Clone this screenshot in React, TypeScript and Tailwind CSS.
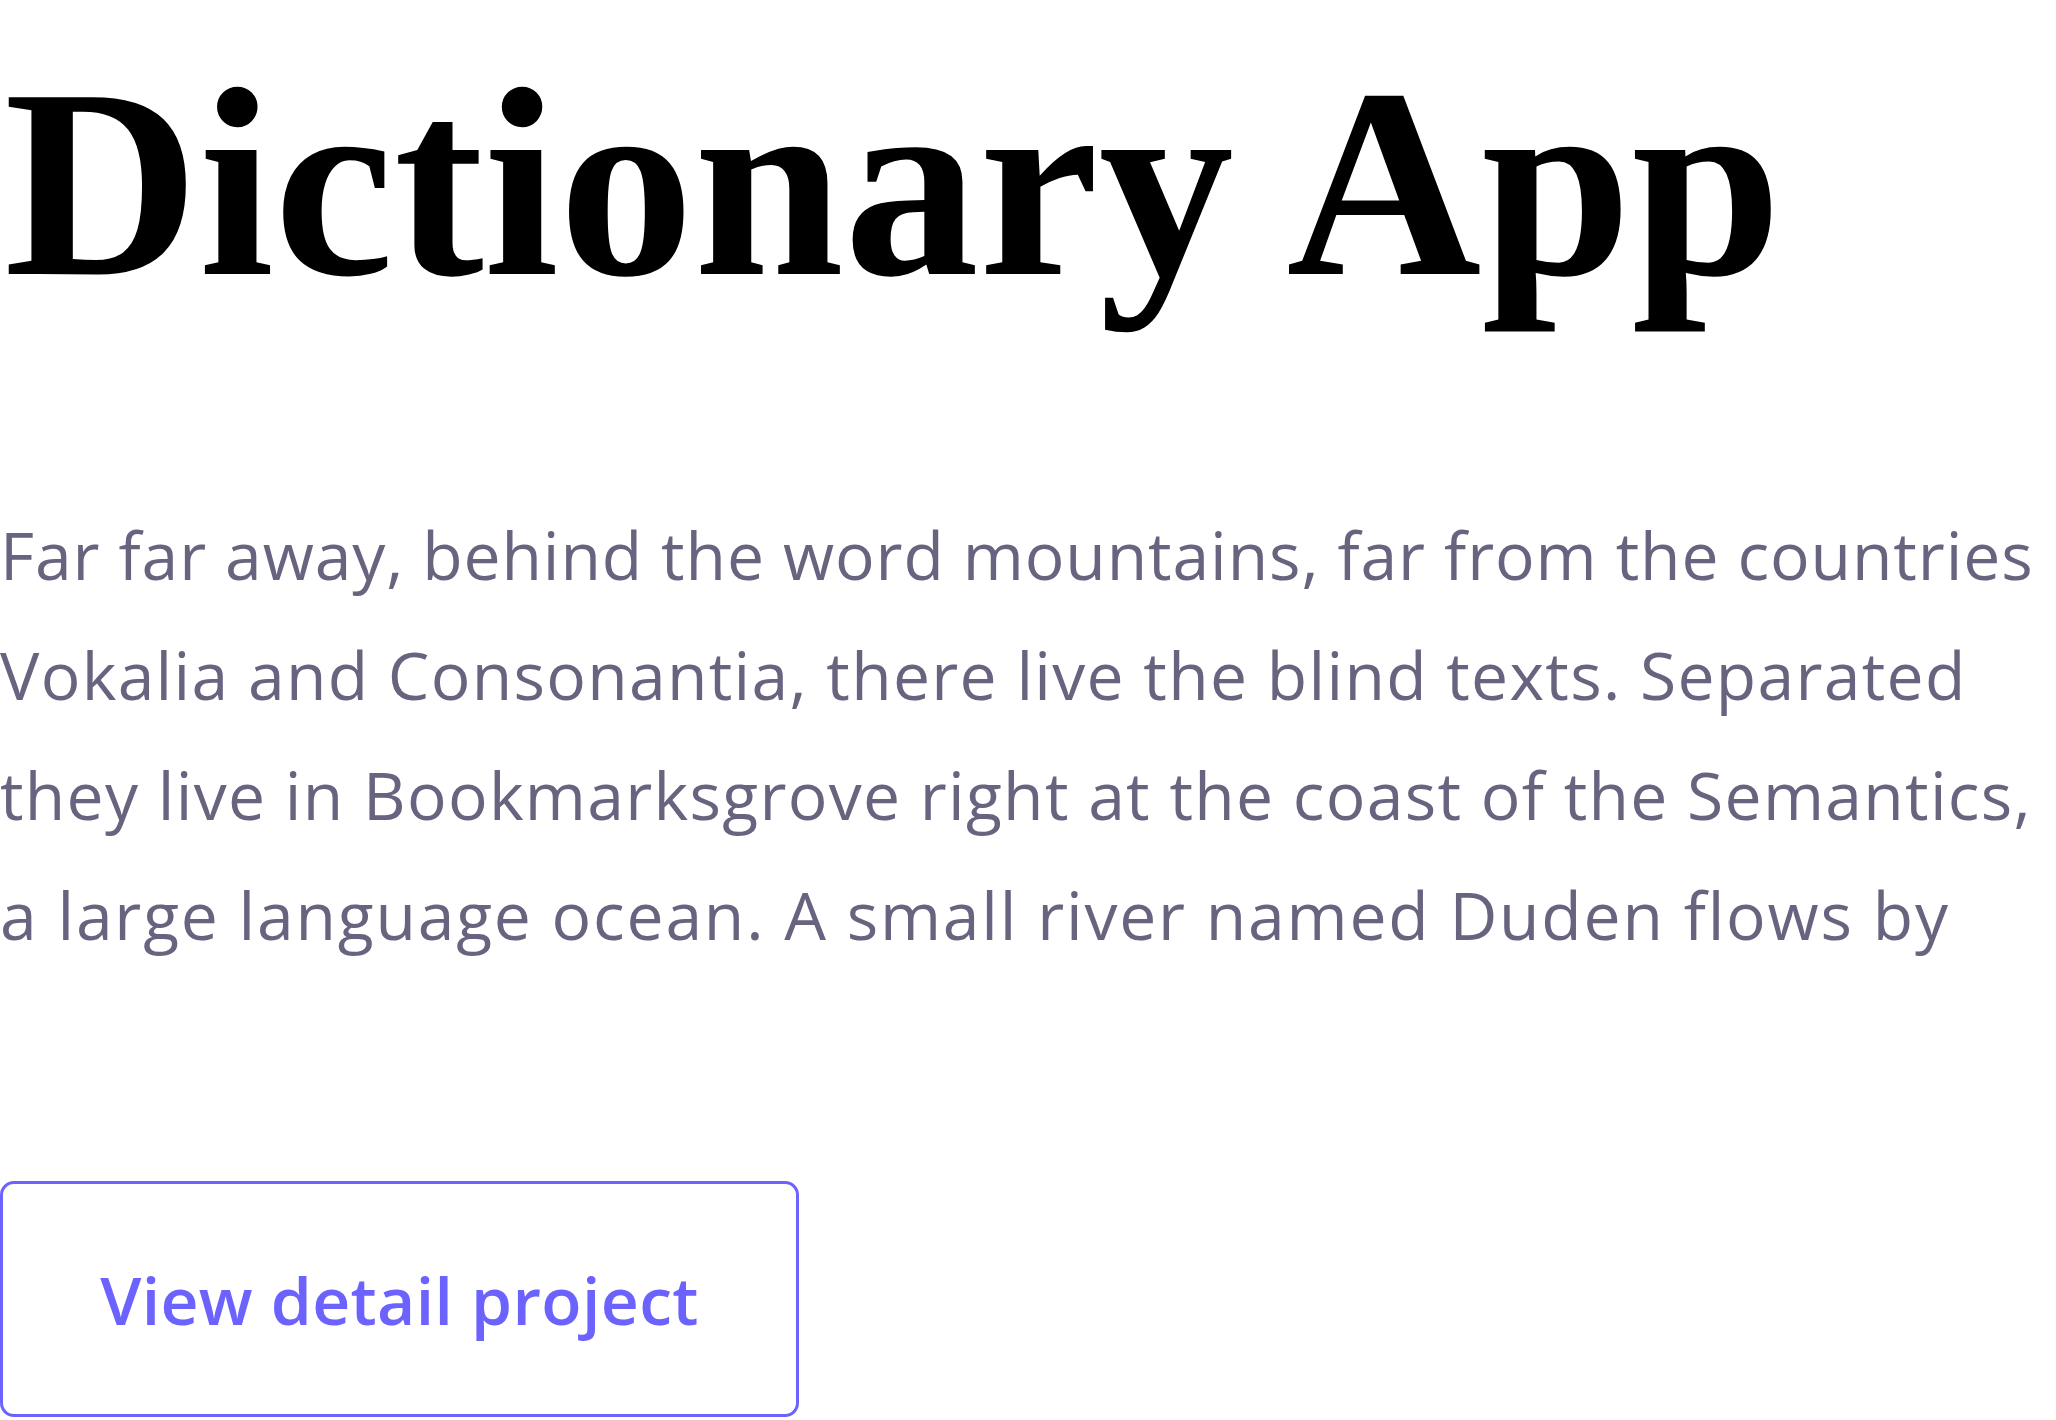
import React from "react";

const lines = [
  { text: "Far far away, behind the word mountains, far from the countries", cls: "tracking-[0.9px]" },
  { text: "Vokalia and Consonantia, there live the blind texts. Separated", cls: "tracking-[1.3px]" },
  { text: "they live in Bookmarksgrove right at the coast of the Semantics,", cls: "tracking-[1.3px]" },
  { text: "a large language ocean. A small river named Duden flows by", cls: "tracking-[1.8px]" },
];

const App = () => {
  return (
    <div className="w-[2056px] h-[1420px] bg-white overflow-hidden">
      <div className="flex flex-col items-start">
        <h1 className="mt-[48px] text-[270px] leading-none font-bold text-black whitespace-nowrap font-['Liberation_Serif',serif] pl-[4px]">
          Dictionary App
        </h1>
        <p className="mt-[176px] text-[66px] leading-[120px] text-[#686480] font-['Open_Sans',sans-serif]">
          {lines.map((l) => (
            <span key={l.text} className={`block whitespace-nowrap ${l.cls}`}>
              {l.text}
            </span>
          ))}
        </p>
        <button
          type="button"
          className="mt-[207px] w-[799px] h-[236px] border-[3px] border-[#6c63ff] rounded-[14px] flex items-center justify-center text-[66px] font-semibold tracking-[0.4px] text-[#6c63ff] font-['Open_Sans',sans-serif]"
        >
          View detail project
        </button>
      </div>
    </div>
  );
};

export default App;
